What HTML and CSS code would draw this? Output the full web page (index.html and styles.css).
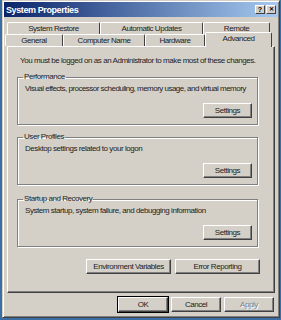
FILE: index.html
```html
<!DOCTYPE html>
<html lang="en">
<head>
  <meta charset="UTF-8" />
  <title>System Properties</title>
  <link rel="stylesheet" href="styles.css">
</head>
<body>
  <div class="window">
    <div class="titlebar">
      <span class="title">System Properties</span>
      <div class="title-buttons">
        <span class="tbtn">?</span>
        <span class="tbtn tbtn-close">&#x2715;</span>
      </div>
    </div>

    <div class="body">
      <div class="tabs">
        <div class="tab-row back">
          <div class="tab w-restore">System Restore</div>
          <div class="tab w-updates">Automatic Updates</div>
          <div class="tab w-remote">Remote</div>
        </div>
        <div class="tab-row front">
          <div class="tab w-general">General</div>
          <div class="tab w-name">Computer Name</div>
          <div class="tab w-hardware">Hardware</div>
          <div class="tab w-advanced selected">Advanced</div>
        </div>
      </div>

      <div class="panel">
        <p class="note">You must be logged on as an Administrator to make most of these changes.</p>

        <fieldset class="group">
          <legend>Performance</legend>
          <p class="tight">Visual effects, processor scheduling, memory usage, and virtual memory</p>
          <div class="group-actions"><button class="btn">Settings</button></div>
        </fieldset>

        <fieldset class="group">
          <legend>User Profiles</legend>
          <p>Desktop settings related to your logon</p>
          <div class="group-actions"><button class="btn">Settings</button></div>
        </fieldset>

        <fieldset class="group group-last">
          <legend>Startup and Recovery</legend>
          <p>System startup, system failure, and debugging information</p>
          <div class="group-actions"><button class="btn">Settings</button></div>
        </fieldset>

        <div class="panel-actions">
          <button class="btn btn-wide">Environment Variables</button>
          <button class="btn btn-wide">Error Reporting</button>
        </div>
      </div>

      <div class="dialog-actions">
        <button class="btn btn-default">OK</button>
        <button class="btn">Cancel</button>
        <button class="btn" disabled>Apply</button>
      </div>
    </div>
  </div>
</body>
</html>
```

FILE: styles.css
```css
body {
  margin: 0;
  background: #3a6ea5;
  font-family: "Liberation Sans", Arial, sans-serif;
  font-size: 8px;
  letter-spacing: -0.45px;
  color: #222;
  height: 320px;
  overflow: hidden;
}

.window {
  margin-left: 2px;
  width: 275px;
  height: 315px;
  background: #d4d0c8;
  border: 1px solid;
  border-color: #d4d0c8 #404040 #404040 #d4d0c8;
  box-shadow: inset 1px 1px 0 #fff, inset -1px -1px 0 #808080;
  padding: 1px 1px 0 0;
}

.titlebar {
  height: 15px;
  margin-left: 1px;
  background: linear-gradient(to right, #0a246a, #a6caf0);
  display: flex;
  align-items: center;
  justify-content: space-between;
}

.title {
  color: #fff;
  font-weight: bold;
  font-size: 9px;
  letter-spacing: -0.4px;
  padding-left: 2px;
}

.title-buttons {
  display: flex;
  gap: 1px;
  margin-right: 2px;
}

.tbtn {
  width: 10px;
  height: 9px;
  box-sizing: border-box;
  background: #d4d0c8;
  border: 1px solid;
  border-color: #fff #404040 #404040 #fff;
  font-weight: bold;
  font-size: 7px;
  letter-spacing: 0;
  line-height: 7px;
  text-align: center;
  color: #000;
}

.tbtn-close {
  font-size: 6px;
}

.body {
  padding: 5px 3px 0 2px;
}

.tab-row {
  display: flex;
  height: 12px;
}

.tab-row.back {
  padding-left: 2px;
}

.tab {
  box-sizing: border-box;
  height: 12px;
  border: 1px solid;
  border-bottom: none;
  border-color: #fff #404040 #404040 #fff;
  border-radius: 2px 2px 0 0;
  text-align: center;
  line-height: 11px;
  background: #d4d0c8;
}

.w-restore { width: 93px; }
.w-updates { width: 103px; }
.w-remote { width: 67px; }
.w-general { width: 58px; }
.w-name { width: 82px; }
.w-hardware { width: 60px; }
.w-advanced { width: 67px; }

.tab.selected {
  position: relative;
  z-index: 1;
  height: 15px;
  margin-top: -2px;
  line-height: 12px;
}

.panel {
  box-sizing: border-box;
  margin-left: 2px;
  width: 268px;
  height: 247px;
  border: 1px solid;
  border-color: #fff #404040 #404040 #fff;
  box-shadow: inset -1px -1px 0 #808080;
  padding: 0 16px 0 9px;
}

.note {
  margin: 9px 0 0 3px;
  line-height: 10px;
  white-space: nowrap;
}

.group {
  margin: 7px 0 0 0;
  padding: 1px 5px 6px 7px;
  border: 1px solid #808080;
  box-shadow: 1px 1px 0 #fff, inset 1px 1px 0 #fff;
  height: 52px;
  box-sizing: border-box;
  display: flex;
  flex-direction: column;
}

.group + .group {
  margin-top: 8px;
}

.group + .group-last {
  margin-top: 10px;
}

.group legend {
  padding: 0 1px;
  margin-left: -2px;
  line-height: 8px;
}

.group p {
  margin: 2px 0 0 0;
  line-height: 10px;
  white-space: nowrap;
}

.group p.tight {
  letter-spacing: -0.52px;
}

.group-actions {
  margin-top: auto;
  display: flex;
  justify-content: flex-end;
}

.btn {
  box-sizing: border-box;
  width: 49px;
  height: 15px;
  padding: 0;
  font-family: inherit;
  font-size: 8px;
  letter-spacing: -0.45px;
  color: #222;
  background: #d4d0c8;
  border: 1px solid;
  border-color: #fff #404040 #404040 #fff;
  box-shadow: inset -1px -1px 0 #808080;
}

.btn-wide {
  width: 85px;
}

.btn-default {
  outline: 1px solid #000;
  outline-offset: 0;
}

.btn:disabled {
  color: #808080;
  text-shadow: 1px 1px 0 #fff;
}

.panel-actions {
  margin-top: 12px;
  display: flex;
  justify-content: flex-end;
  gap: 4px;
  margin-right: -2px;
}

.dialog-actions {
  margin-top: 4px;
  display: flex;
  justify-content: flex-end;
  gap: 3px;
  width: 268px;
  margin-left: 1px;
}

.dialog-actions .btn {
  width: 50px;
}
```
